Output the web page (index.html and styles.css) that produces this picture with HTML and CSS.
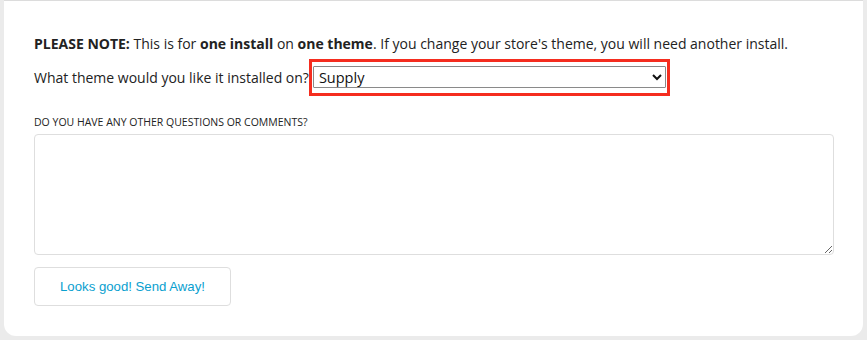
FILE: index.html
```html
<!DOCTYPE html>
<html>
<head>
<meta charset="utf-8">
<link rel="stylesheet" href="styles.css">
</head>
<body>
<div class="card">
  <p class="note"><b>PLEASE NOTE:</b> This is for <b>one install</b> on <b>one theme</b>. If you change your store's theme, you will need another install.</p>
  <div class="theme-row">
    <span>What theme would you like it installed on?</span>
    <span class="select-wrap">
      <select class="theme-select">
        <option>Supply</option>
      </select>
    </span>
  </div>
  <label class="field-label">Do you have any other questions or comments?</label>
  <textarea class="comments"></textarea>
  <button class="send">Looks good! Send Away!</button>
</div>
</body>
</html>
```

FILE: styles.css
```css
html, body {
  margin: 0;
  padding: 0;
  background: #ebebeb;
  height: 340px;
  overflow: hidden;
}
.card {
  margin: 0 4px;
  height: 336px;
  box-sizing: border-box;
  background: #fff;
  border-top: 1px solid #dcdcdc;
  border-radius: 0 0 12px 12px;
  padding: 33px 30px 0 30px;
  font-family: "Open Sans", sans-serif;
  color: #222;
  display: flex;
  flex-direction: column;
  align-items: flex-start;
}
.note {
  margin: 0;
  font-size: 14px;
  line-height: 20px;
}
.theme-row {
  margin-top: 5px;
  display: flex;
  align-items: center;
  font-size: 14px;
}
.select-wrap {
  margin-left: 0;
  border: 3px solid #f52d1f;
  padding: 4px 1px 5px 1px;
  display: flex;
}
.theme-select {
  width: 353px;
  height: 22px;
  font-family: "Open Sans", sans-serif;
  font-size: 14.5px;
  color: #111;
  border: 1px solid #8a8a8a;
  border-radius: 1px;
  background: #fff;
  padding: 0 0 0 1px;
}
.field-label {
  margin-top: 19px;
  font-size: 10.5px;
  line-height: 14px;
  text-transform: uppercase;
  color: #222;
}
.comments {
  margin-top: 5px;
  width: 800px;
  height: 121px;
  box-sizing: border-box;
  border: 1px solid #dedede;
  border-radius: 4px;
  resize: vertical;
}
.send {
  margin-top: 12px;
  width: 197px;
  height: 39px;
  background: #fff;
  border: 1px solid #dedede;
  border-radius: 4px;
  font-family: "Liberation Sans", Arial, sans-serif;
  font-size: 13.2px;
  color: #0aa0cf;
}
```
